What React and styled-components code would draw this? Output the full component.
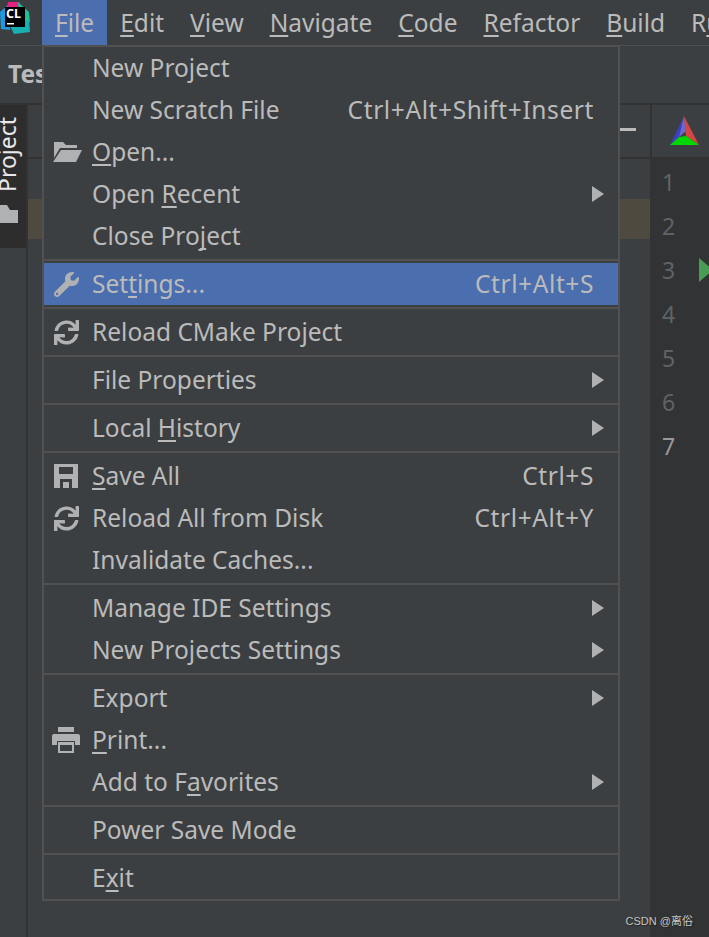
import React from "react";
import styled, { createGlobalStyle } from "styled-components";
import { FaSync, FaWrench } from "react-icons/fa";

const GlobalStyle = createGlobalStyle`
  html, body {
    margin: 0;
    padding: 0;
    background: #3c3f41;
  }
  * {
    box-sizing: border-box;
  }
`;

const Page = styled.div`
  position: relative;
  width: 709px;
  height: 937px;
  overflow: hidden;
  background: #3c3f41;
  color: #bbbbbb;
  font-family: "Noto Sans", "Open Sans", sans-serif;
  font-size: 24.5px;
`;

const MenuBar = styled.div`
  height: 45px;
  display: flex;
  align-items: stretch;
  white-space: nowrap;
`;

const LogoSlot = styled.div`
  width: 42px;
  flex: none;
  padding-top: 2px;
`;

const MenuTitle = styled.div`
  flex: none;
  display: flex;
  align-items: center;
  padding: 0 13px;
  height: 45px;
  background: ${(p) => (p.$active ? "#4b6eaf" : "transparent")};
`;

const Mnemonic = styled.span`
  text-decoration: underline;
  text-decoration-thickness: 2px;
  text-underline-offset: 3px;
  text-decoration-skip-ink: none;
`;

const Toolbar = styled.div`
  height: 60px;
  display: flex;
  align-items: center;
  padding: 0 0 2px 8px;
  border-top: 1px solid #515151;
  border-bottom: 2px solid #323232;
  font-weight: 700;
`;

const Workspace = styled.div`
  display: flex;
  height: 832px;
`;

const SideStripe = styled.div`
  width: 28px;
  flex: none;
  border-right: 2px solid #323232;
`;

const ProjectTab = styled.div`
  height: 143px;
  background: #2d2d2e;
  color: #e8e8e8;
  display: flex;
  flex-direction: column;
  align-items: flex-start;
  overflow: hidden;
`;

const ProjectLabel = styled.span`
  writing-mode: vertical-rl;
  transform: rotate(180deg);
  height: 87px;
  width: 24px;
  margin-left: -5px;
  font-size: 23px;
  line-height: 24px;
  white-space: nowrap;
`;

const FolderGlyph = styled.svg`
  flex: none;
  margin-top: 13px;
`;

const ToolPanel = styled.div`
  width: 622px;
  flex: none;
`;

const PanelHeader = styled.div`
  height: 54px;
  display: flex;
  align-items: center;
  justify-content: flex-end;
  padding: 0 14px 4px 0;
  border-bottom: 2px solid #323232;
`;

const HideBar = styled.div`
  width: 16px;
  height: 3px;
  background: #bbbbbb;
`;

const SelectedFile = styled.div`
  height: 40px;
  margin-top: 40px;
  background: #4e4a3f;
`;

const EditorColumn = styled.div`
  flex: 1;
  min-width: 0;
`;

const EditorTabs = styled.div`
  height: 54px;
  padding: 11px 0 0 18px;
  border-left: 2px solid #323232;
  border-bottom: 2px solid #323232;
`;

const Gutter = styled.div`
  height: 778px;
  background: #313335;
  padding-top: 1px;
`;

const GutterRow = styled.div`
  height: 44px;
  display: flex;
  align-items: center;
  padding-left: 12px;
  color: ${(p) => (p.$current ? "#999999" : "#606366")};
`;

const LineNumber = styled.span`
  width: 37px;
  flex: none;
  font-size: 23px;
`;

const RunArrow = styled.svg`
  width: 10px;
  height: 24px;
  flex: none;
`;

const Menu = styled.div`
  position: absolute;
  left: 42px;
  top: 45px;
  width: 578px;
  height: 856px;
  background: #3c3f41;
  border: 2px solid #515151;
  white-space: nowrap;
`;

const Item = styled.div`
  height: 42px;
  display: flex;
  align-items: center;
  padding-right: ${(p) => (p.$arrow ? "14px" : "24px")};
  background: ${(p) => (p.$selected ? "#4b6eaf" : "transparent")};
`;

const IconSlot = styled.span`
  width: 44px;
  height: 42px;
  flex: none;
  display: flex;
  align-items: center;
  justify-content: center;
  margin-right: 4px;
  color: #afb1b3;
  font-size: 25px;
`;

const ItemLabel = styled.span`
  flex: 1;
  padding-bottom: 2px;
`;

const Shortcut = styled.span`
  padding-bottom: 2px;
  letter-spacing: 0.6px;
`;

const Separator = styled.div`
  height: 6px;
  padding: 2px 0;

  &::before {
    content: "";
    display: block;
    height: 2px;
    background: #515151;
  }
`;

const SubArrow = styled.span`
  width: 0;
  height: 0;
  border-left: 12px solid #afb1b3;
  border-top: 8px solid transparent;
  border-bottom: 8px solid transparent;
`;

const Watermark = styled.div`
  position: absolute;
  right: 16px;
  bottom: 9px;
  font-size: 11px;
  font-family: "Liberation Sans", "Noto Sans CJK SC", sans-serif;
  color: #c4c4c4;
  text-shadow: 1px 1px 1px #222;
`;

const ClLogo = () => (
  <svg width="31" height="32" viewBox="0 0 31 32">
    <polygon points="8,0 19,-1 21,8 7,8" fill="#e6217f" />
    <polygon points="18,0 29,10 30,20 20,24" fill="#1fbf8f" />
    <polygon points="0,10 8,3 10,28 1,27" fill="#1a9be0" />
    <polygon points="10,24 29,18 30,30 14,32" fill="#16b0b0" />
    <rect x="5" y="5" width="20" height="20" fill="#000" />
    <text x="6" y="15.5" fill="#fff" fontSize="12.5" fontWeight="700" fontFamily="Noto Sans, sans-serif">CL</text>
    <rect x="7" y="21" width="7" height="1.5" fill="#fff" />
  </svg>
);

const CMakeIcon = () => (
  <svg width="32" height="32" viewBox="0 0 32 32">
    <polygon points="14,0 0,29 9,21" fill="#3d3dc8" />
    <polygon points="14,0 9,21 16,15" fill="#6a6ac8" />
    <polygon points="14,0 16,20 29,29" fill="#d64545" />
    <polygon points="0,29 29,29 16,20 9,21" fill="#00d800" />
  </svg>
);

const FolderOpenIcon = () => (
  <svg width="30" height="22" viewBox="0 0 30 22" style={{ marginLeft: 4 }}>
    <path d="M1 1h9l3 3h11v3H7L1 17z" fill="currentColor" />
    <path d="M8 9h21l-6 12H0z" fill="currentColor" />
  </svg>
);

const SaveIcon = () => (
  <svg width="24" height="24" viewBox="0 0 24 24">
    <path
      fillRule="evenodd"
      d="M0 0h24v24H0zM5 3v7h14V3zM6 15v9h12v-9zM9 18h6v6H9z"
      fill="currentColor"
    />
  </svg>
);

const PrintIcon = () => (
  <svg width="28" height="26" viewBox="0 0 28 26">
    <rect x="6" y="0" width="16" height="5" fill="currentColor" />
    <path d="M2 7h24a2 2 0 0 1 2 2v9h-5v-4H5v4H0V9a2 2 0 0 1 2-2z" fill="currentColor" />
    <path fillRule="evenodd" d="M6 15h16v11H6zM8 18v6h12v-6z" fill="currentColor" />
  </svg>
);

// "_" marks the letter that gets the underline
const Label = ({ text }) => {
  const at = text.indexOf("_");
  if (at < 0) return text;
  return (
    <>
      {text.slice(0, at)}
      <Mnemonic>{text[at + 1]}</Mnemonic>
      {text.slice(at + 2)}
    </>
  );
};

const titles = ["_File", "_Edit", "_View", "_Navigate", "_Code", "_Refactor", "_Build", "R_un"];

const groups = [
  [
    { label: "New Project" },
    { label: "New Scratch File", keys: "Ctrl+Alt+Shift+Insert" },
    { label: "_Open...", icon: <FolderOpenIcon /> },
    { label: "Open _Recent", arrow: true },
    { label: "Close Pro_ject" },
  ],
  [{ label: "Set_tings...", keys: "Ctrl+Alt+S", icon: <FaWrench />, selected: true }],
  [{ label: "Reload CMake Project", icon: <FaSync /> }],
  [{ label: "File Properties", arrow: true }],
  [{ label: "Local _History", arrow: true }],
  [
    { label: "_Save All", keys: "Ctrl+S", icon: <SaveIcon /> },
    { label: "Reload All from Disk", keys: "Ctrl+Alt+Y", icon: <FaSync /> },
    { label: "Invalidate Caches..." },
  ],
  [
    { label: "Manage IDE Settings", arrow: true },
    { label: "New Projects Settings", arrow: true },
  ],
  [
    { label: "Export", arrow: true },
    { label: "_Print...", icon: <PrintIcon /> },
    { label: "Add to F_avorites", arrow: true },
  ],
  [{ label: "Power Save Mode" }],
  [{ label: "E_xit" }],
];

export default function App() {
  return (
    <Page>
      <GlobalStyle />
      <MenuBar>
        <LogoSlot>
          <ClLogo />
        </LogoSlot>
        {titles.map((t, i) => (
          <MenuTitle key={t} $active={i === 0}>
            <span>
              <Label text={t} />
            </span>
          </MenuTitle>
        ))}
      </MenuBar>
      <Toolbar>Test</Toolbar>
      <Workspace>
        <SideStripe>
          <ProjectTab>
            <ProjectLabel>Project</ProjectLabel>
            <FolderGlyph width="18" height="18" viewBox="0 0 18 18">
              <path d="M0 0h7l3 5h8v13H0z" fill="#afb1b3" />
            </FolderGlyph>
          </ProjectTab>
        </SideStripe>
        <ToolPanel>
          <PanelHeader>
            <HideBar />
          </PanelHeader>
          <SelectedFile />
        </ToolPanel>
        <EditorColumn>
          <EditorTabs>
            <CMakeIcon />
          </EditorTabs>
          <Gutter>
            {[1, 2, 3, 4, 5, 6, 7].map((n) => (
              <GutterRow key={n} $current={n === 7}>
                <LineNumber>{n}</LineNumber>
                {n === 3 && (
                  <RunArrow viewBox="0 0 10 24">
                    <polygon points="0,0 14,12 0,24" fill="#499c54" />
                  </RunArrow>
                )}
              </GutterRow>
            ))}
          </Gutter>
        </EditorColumn>
      </Workspace>
      <Menu>
        {groups.map((group, g) => (
          <React.Fragment key={g}>
            {g > 0 && <Separator />}
            {group.map((item) => (
              <Item key={item.label} $selected={item.selected} $arrow={item.arrow}>
                <IconSlot>{item.icon}</IconSlot>
                <ItemLabel>
                  <Label text={item.label} />
                </ItemLabel>
                {item.keys && <Shortcut>{item.keys}</Shortcut>}
                {item.arrow && <SubArrow />}
              </Item>
            ))}
          </React.Fragment>
        ))}
      </Menu>
      <Watermark>CSDN @离俗</Watermark>
    </Page>
  );
}
